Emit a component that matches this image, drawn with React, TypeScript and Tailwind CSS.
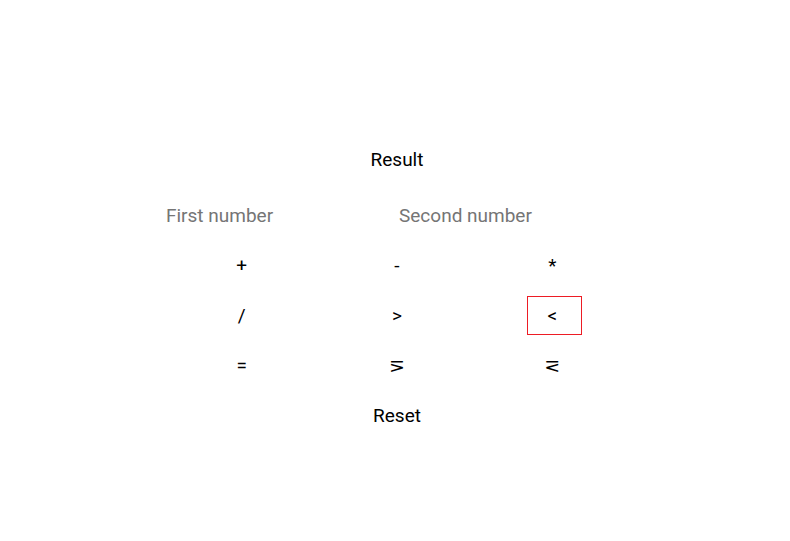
import { useState } from "react";

type Operator = { symbol: string; name: string; apply: (a: number, b: number) => number | boolean };

const operators: Operator[] = [
  { symbol: "+", name: "Add", apply: (a, b) => a + b },
  { symbol: "-", name: "Subtract", apply: (a, b) => a - b },
  { symbol: "*", name: "Multiply", apply: (a, b) => a * b },
  { symbol: "/", name: "Divide", apply: (a, b) => a / b },
  { symbol: ">", name: "Greater than", apply: (a, b) => a > b },
  { symbol: "<", name: "Less than", apply: (a, b) => a < b },
  { symbol: "=", name: "Equal", apply: (a, b) => a === b },
  { symbol: "⋝", name: "Greater than or equal", apply: (a, b) => a >= b },
  { symbol: "⋜", name: "Less than or equal", apply: (a, b) => a <= b },
];

export default function App() {
  const [first, setFirst] = useState("");
  const [second, setSecond] = useState("");
  const [result, setResult] = useState("Result");
  const [active, setActive] = useState("<");

  const reset = () => {
    setFirst("");
    setSecond("");
    setResult("Result");
  };

  return (
    <main className="flex min-h-screen flex-col items-center justify-center bg-white pl-1 pt-[35px] font-['Roboto','DejaVu_Sans',sans-serif] text-[19px] leading-6 text-black">
      <output className="mb-8">{result}</output>
      <div className="mb-[18px] ml-1 flex w-full max-w-[466px]">
        <input
          aria-label="First number"
          placeholder="First number"
          value={first}
          onChange={(e) => setFirst(e.target.value)}
          className="h-6 w-1/2 min-w-0 outline-none placeholder:text-[#757575]"
        />
        <input
          aria-label="Second number"
          placeholder="Second number"
          value={second}
          onChange={(e) => setSecond(e.target.value)}
          className="h-6 w-1/2 min-w-0 outline-none placeholder:text-[#757575]"
        />
      </div>
      <div className="mb-[19px] ml-1 grid w-full max-w-[466px] grid-cols-3 justify-items-center gap-y-[11px]">
        {operators.map(({ symbol, name, apply }) => (
          <button
            key={symbol}
            type="button"
            aria-label={name}
            onClick={() => {
              setActive(symbol);
              setResult(String(apply(Number(first), Number(second))));
            }}
            className={`flex h-[39px] w-[55px] items-center justify-center border pr-1 ${
              active === symbol ? "border-[#ed1c24]" : "border-transparent"
            }`}
          >
            {symbol}
          </button>
        ))}
      </div>
      <button type="button" onClick={reset}>
        Reset
      </button>
    </main>
  );
}
